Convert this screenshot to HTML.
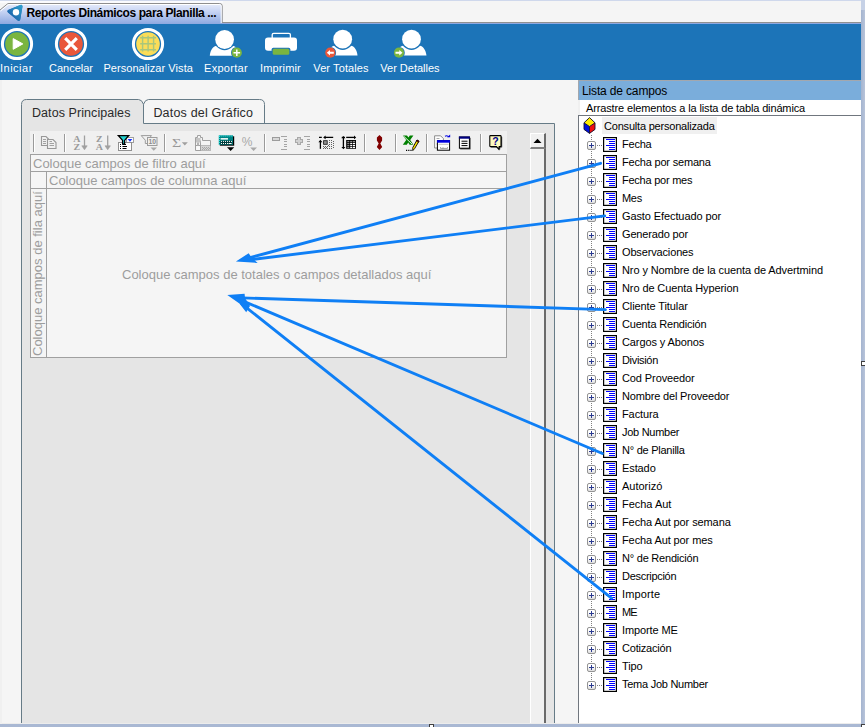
<!DOCTYPE html>
<html lang="es"><head><meta charset="utf-8"><title>Reportes Dinámicos para Planilla</title>
<style>
*{box-sizing:border-box;margin:0;padding:0}
html,body{width:865px;height:727px;overflow:hidden;background:#f5f5f5;font-family:"Liberation Sans",sans-serif}
body{position:relative}
.abs{position:absolute}
/* top strip */
.strip{position:absolute;left:0;top:0;width:865px;height:24px;background:#f5f5f5}
.strip .l0{position:absolute;left:0;top:0;width:865px;height:1px;background:#cfd8ec}
.strip .l1{position:absolute;left:0;top:1px;width:223px;height:2px;background:#fbfbfd}
.strip .lb{position:absolute;left:222px;top:22px;width:643px;height:1px;background:#909090}
.strip .lc{position:absolute;left:0;top:23px;width:865px;height:1px;background:#8fa9e2}
.ttab{position:absolute;left:0;top:0;width:224px;height:24px}
.ttl{position:absolute;left:26.5px;top:4px;height:18px;line-height:18px;font-size:12px;font-weight:bold;color:#000;letter-spacing:-0.38px;white-space:nowrap}
.bar{position:absolute;left:0;top:24px;width:865px;height:56px;background:#1c74b8}
.lbl{position:absolute;top:61px;height:14px;line-height:14px;font-size:11px;color:#fff;white-space:nowrap}
/* right panel */
.rp{position:absolute;left:578px;top:80px;width:287px;height:647px;background:#f0f0f0}
.rph{position:absolute;left:0;top:0;width:287px;height:20px;background:#7aaddb;border-top:1px solid #a3a7ad;border-left:1px solid #a3a7ad}
.rph span{position:absolute;left:3px;top:2px;line-height:16px;font-size:12px;color:#000;letter-spacing:-0.15px;white-space:nowrap}
.rps{position:absolute;left:2px;top:20px;width:285px;height:16px;background:#fff}
.rps span{position:absolute;left:6px;top:1px;line-height:14px;font-size:11px;color:#000;letter-spacing:-0.14px;white-space:nowrap}
.tree{position:absolute;left:0;top:35px;width:283px;height:612px;border:1px solid #70767e;border-right:none;border-bottom:none;background:#fff}
.cube{position:absolute;left:4px;top:0.5px}
.root{position:absolute;left:23px;top:1px;width:115px;height:17px;background:#f0f0f0}
.root span{position:absolute;left:2px;top:2px;line-height:15px;font-size:11px;letter-spacing:-0.2px;white-space:nowrap}
.vdot{position:absolute;left:12px;top:19px;width:1px;height:549px;background:repeating-linear-gradient(to bottom,#808080 0,#808080 1px,transparent 1px,transparent 2px)}
.rows{position:absolute;left:0;top:0}
.row{position:absolute;left:578px;height:18px;width:280px}
.pm{position:absolute;left:9px;top:5px;width:9px;height:9px;border:1px solid #939393;border-radius:2px;background:linear-gradient(#ffffff 30%,#dedede)}
.pm:before{content:"";position:absolute;left:1px;top:3px;width:5px;height:1px;background:#2a3a90}
.pm:after{content:"";position:absolute;left:3px;top:1px;width:1px;height:5px;background:#2a3a90}
.hd{position:absolute;left:19px;top:9px;width:5px;height:1px;background:repeating-linear-gradient(to right,#808080 0,#808080 1px,transparent 1px,transparent 2px)}
.fi{position:absolute;left:25px;top:1px}
.ft{position:absolute;left:44px;top:1px;line-height:14px;font-size:11px;color:#000;letter-spacing:-0.1px;white-space:nowrap}
/* left */
.tabpage{position:absolute;left:21px;top:123px;width:534px;height:610px;border:1px solid #8c9aa4;background:#e5e5e5}
.tab1{position:absolute;left:21px;top:99px;width:123px;height:26px;border:1px solid #8c9aa4;border-bottom:none;border-radius:9px 9px 0 0;background:#e5e5e5}
.tab2{position:absolute;left:143px;top:101px;width:123px;height:23px;border:1px solid #8c9aa4;border-bottom:none;border-radius:9px 9px 0 0;background:#f2f2f2}
.tabt{position:absolute;line-height:16px;font-size:12.5px;color:#2a2a2a;white-space:nowrap}
.ptb{position:absolute;left:30px;top:131px;width:477px;height:24px;background:#f0f0f0}
.grid{position:absolute;left:30px;top:154px;width:477px;height:204px;background:#f5f5f5;border:1px solid #a0a0a0}
.gt{position:absolute;font-size:13px;color:#9d9d9d;white-space:nowrap;line-height:16px}
.sep{position:absolute;top:134px;width:2px;height:18px;border-left:1px solid #909090;border-right:1px solid #fff}

</style></head><body>
<svg width="0" height="0" style="position:absolute"><defs>
<g id="fld"><rect x="0.6" y="0.6" width="12.8" height="13.8" fill="#fff" stroke="#000" stroke-width="1.2"/><path d="M3,2.5H12M6,4.5H12M6,6.5H12M3,8.5H12M6,10.5H12M6,12.5H12" stroke="#0000ff" stroke-width="1" fill="none" shape-rendering="crispEdges"/></g>
</defs></svg>
<div class="strip"><div class="l0"></div><div class="l1"></div><div class="lb"></div><div class="lc"></div>
<svg class="ttab" width="224" height="24" viewBox="0 0 224 24">
<defs><linearGradient id="tg" x1="0" y1="0" x2="0" y2="1"><stop offset="0" stop-color="#e8edfb"/><stop offset="0.4" stop-color="#c6d3f3"/><stop offset="1" stop-color="#8da8e0"/></linearGradient>
<linearGradient id="lg" x1="0" y1="1" x2="1" y2="0"><stop offset="0" stop-color="#1b5aa6"/><stop offset="1" stop-color="#2c9ccb"/></linearGradient></defs>
<path d="M0,10 L8,3.5 H219.7 Q222.2,3.5 222.2,6 V24 H0 Z" fill="url(#tg)"/>
<path d="M0,10 L8,3.5 H219.7 Q222.2,3.5 222.2,6 V23" fill="none" stroke="#8e8e8e" stroke-width="1"/>
<path d="M0.5,11 L8.3,4.5 H219.7 Q221.2,4.5 221.2,6 V23" fill="none" stroke="#ffffff" stroke-width="1"/>
<path d="M9,11.3 L20.9,6.4 L18.7,19.3 Z" fill="#2277b8" stroke="#2277b8" stroke-width="3.2" stroke-linejoin="round"/>
<path d="M9,11.3 L20.9,6.4 L18.7,19.3 Z" fill="url(#lg)" stroke="url(#lg)" stroke-width="3" stroke-linejoin="round"/>
<circle cx="16" cy="12.3" r="3.2" fill="#fff"/>
</svg>
<div class="ttl">Reportes Dinámicos para Planilla ...</div>
</div>
<div class="bar"></div>
<svg class="abs" style="left:0;top:24px" width="450" height="40" viewBox="0 24 450 40">
<!-- Iniciar -->
<circle cx="17" cy="44" r="14.6" fill="none" stroke="#fff" stroke-width="3"/>
<circle cx="17" cy="44" r="11.8" fill="#7ab540"/>
<path d="M13.2,38.6 L22.8,43.9 L13.2,49.3 Z" fill="#fff" stroke="#fff" stroke-width="1" stroke-linejoin="round"/>
<!-- Cancelar -->
<circle cx="71" cy="44" r="14.6" fill="none" stroke="#fff" stroke-width="3"/>
<circle cx="71" cy="44" r="11.8" fill="#e9573a"/>
<path d="M65.2,38.2 L76.8,49.8 M76.8,38.2 L65.2,49.8" stroke="#fff" stroke-width="3.2" stroke-linecap="butt"/>
<!-- Personalizar -->
<circle cx="148" cy="44" r="14.6" fill="none" stroke="#fff" stroke-width="3"/>
<circle cx="148" cy="44" r="11.8" fill="#fbdd58"/>
<path d="M142.6,35.8 V51.6 M148.1,35.8 V51.6 M153.6,35.8 V51.6 M140.2,37.8 H156 M140.2,43.8 H156 M140.2,49.8 H156" stroke="#a8c67c" stroke-width="1.4" fill="none"/>
<!-- Exportar -->
<path d="M209.8,55.8 C210.2,50.4 212.4,47.2 215.6,45.9 H233.6 C236.8,47.2 239,50.4 239.4,55.8 Z" fill="#fff"/>
<circle cx="224.6" cy="39.5" r="10.7" fill="#1c74b8"/>
<circle cx="224.6" cy="39.5" r="9.4" fill="#fff"/>
<circle cx="236.8" cy="52.7" r="5.8" fill="#1c74b8"/>
<circle cx="236.8" cy="52.7" r="5.1" fill="#7ab540"/>
<path d="M233.5,52.7 H240.1 M236.8,49.4 V56" stroke="#fff" stroke-width="1.5"/>
<!-- Imprimir -->
<rect x="272.2" y="33.3" width="18.2" height="6" rx="1.5" fill="none" stroke="#fff" stroke-width="1.3"/>
<rect x="265" y="37.4" width="32" height="13.4" rx="3" fill="#fff"/>
<rect x="271.6" y="47.8" width="18.8" height="7.6" rx="1.8" fill="#1c74b8"/>
<rect x="272.7" y="48.8" width="16.6" height="5.9" rx="1.5" fill="#7ab540"/>
<!-- Ver Totales -->
<path d="M328,55.6 C328.4,50.2 330.6,47 333.8,45.7 H351.6 C354.8,47 357,50.2 357.5,55.6 Z" fill="#fff"/>
<circle cx="342.7" cy="39.2" r="10.7" fill="#1c74b8"/>
<circle cx="342.7" cy="39.2" r="9.4" fill="#fff"/>
<circle cx="330.3" cy="52.7" r="5.8" fill="#1c74b8"/>
<circle cx="330.3" cy="52.7" r="5.1" fill="#e9573a"/>
<path d="M326.8,52.7 L330,50 V51.7 H333.8 V53.7 H330 V55.4 Z" fill="#fff"/>
<!-- Ver Detalles -->
<path d="M396.8,55.6 C397.2,50.2 399.4,47 402.6,45.7 H420.4 C423.6,47 425.8,50.2 426.5,55.6 Z" fill="#fff"/>
<circle cx="411.5" cy="39.2" r="10.7" fill="#1c74b8"/>
<circle cx="411.5" cy="39.2" r="9.4" fill="#fff"/>
<circle cx="399" cy="52.7" r="5.8" fill="#1c74b8"/>
<circle cx="399" cy="52.7" r="5.1" fill="#7ab540"/>
<path d="M402.5,52.7 L399.3,50 V51.7 H395.5 V53.7 H399.3 V55.4 Z" fill="#fff"/>
</svg>
<div class="lbl" id="l1" style="left:0px;letter-spacing:0.5px">Iniciar</div>
<div class="lbl" id="l2" style="left:49px">Cancelar</div>
<div class="lbl" id="l3" style="left:103.4px;letter-spacing:0.06px">Personalizar Vista</div>
<div class="lbl" id="l4" style="left:204px;letter-spacing:0.3px">Exportar</div>
<div class="lbl" id="l5" style="left:260px;letter-spacing:0.15px">Imprimir</div>
<div class="lbl" id="l6" style="left:313.3px;letter-spacing:0.1px">Ver Totales</div>
<div class="lbl" id="l7" style="left:380.3px">Ver Detalles</div>

<svg class="abs" style="left:0;top:90px" width="600" height="640" viewBox="0 90 600 640">
<path d="M21.5,730 V104.5 Q21.5,99.5 26.5,99.5 H138.5 Q141.8,99.5 143.5,104.2 V123.5 H554.5 V730 Z" fill="#e5e5e5"/>
<path d="M143.5,104.2 Q145.2,99.5 148.5,99.5 H259.5 Q264.5,99.5 264.5,104.5 V123.5 H143.5 Z" fill="#f5f5f5"/>
<path d="M21.5,730 V104.5 Q21.5,99.5 26.5,99.5 H138.5 Q141.8,99.5 143.5,104.2 Q145.2,99.5 148.5,99.5 H259.5 Q264.5,99.5 264.5,104.5 V123.5 M143.5,104.2 V123.5 H554.5 V730" fill="none" stroke="#667b87" stroke-width="1"/>
</svg>
<div class="tabt" id="t1" style="left:32px;top:105px;letter-spacing:0.07px">Datos Principales</div>
<div class="tabt" id="t2" style="left:153.4px;top:105px;letter-spacing:0.19px">Datos del Gráfico</div>
<div class="ptb"></div>
<div class="grid">
<div class="abs" style="left:0;top:16px;width:475px;height:1px;background:#a0a0a0"></div>
<div class="abs" style="left:0;top:33px;width:475px;height:1px;background:#a0a0a0"></div>
<div class="abs" style="left:15px;top:17px;width:1px;height:185px;background:#a0a0a0"></div>
<div class="gt" id="g1" style="left:2px;top:1px">Coloque campos de filtro aquí</div>
<div class="gt" id="g2" style="left:18px;top:18px">Coloque campos de columna aquí</div>
<div class="gt" id="g3" style="left:91px;top:112px">Coloque campos de totales o campos detallados aquí</div>
<div class="gt" id="g4" style="left:-1.5px;top:200.5px;transform-origin:0 0;transform:rotate(-90deg)">Coloque campos de fila aquí</div>
</div>
<!-- scrollbar -->
<div class="abs" style="left:530px;top:133px;width:16px;height:600px;background:#f0f0f0;border-left:1px solid #fff;border-right:2px solid #6a6a6a"></div>
<div class="abs" style="left:530px;top:133px;width:16px;height:16px;background:#f0f0f0;border-left:1px solid #fff;border-top:1px solid #fff;border-right:2px solid #6a6a6a;border-bottom:2px solid #808080"></div>
<svg class="abs" style="left:533px;top:137.5px" width="9" height="6" viewBox="0 0 9 6"><path d="M0.5,5 L4.5,0.8 L8.5,5 Z" fill="#000"/></svg>


<svg class="abs" style="left:30px;top:131px" width="477" height="24" viewBox="30 131 477 24" shape-rendering="auto">
<g fill="none" stroke="#9a9a9a" stroke-width="1">
<!-- separators -->
<path d="M33.5,134V152M64.5,134V152M164.5,134V152M264.5,134V152M364.5,134V152M395.5,134V152M426.5,134V152M480.5,134V152"/>
</g>
<g fill="none" stroke="#ffffff" stroke-width="1">
<path d="M34.5,134V152M65.5,134V152M165.5,134V152M265.5,134V152M365.5,134V152M396.5,134V152M427.5,134V152M481.5,134V152"/>
</g>
<!-- copy (disabled) -->
<g fill="#f0f0f0" stroke="#989898" stroke-width="1.1">
<path d="M41.5,136.5H46L48.5,139V145.5H41.5Z"/>
<path d="M47.5,139.5H53L56,142.5V148.5H47.5Z"/>
<path d="M43,139.5H46M43,141.5H46M43,143.5H46M49.5,143.5H54M49.5,145.5H54M49.5,141.5H52" stroke-width="0.9"/>
</g>
<!-- A-Z -->
<g font-family="Liberation Serif,serif" font-weight="bold" font-size="8.6px" fill="#9a9a9a" text-anchor="middle">
<text x="76.8" y="141.6" textLength="7.2" lengthAdjust="spacingAndGlyphs">A</text><text x="76.8" y="149.5" textLength="6.6" lengthAdjust="spacingAndGlyphs">Z</text>
<text x="99.3" y="141.6" textLength="6.6" lengthAdjust="spacingAndGlyphs">Z</text><text x="99.3" y="149.5" textLength="7.2" lengthAdjust="spacingAndGlyphs">A</text>
</g>
<g fill="#a0a0a0" stroke="#a0a0a0" stroke-width="1">
<path d="M84.5,135.5V147" fill="none" stroke-width="1.3"/><path d="M81.8,145.8H87.2L84.5,149.8Z" stroke-width="0.6"/>
<path d="M107.7,135.5V147" fill="none" stroke-width="1.3"/><path d="M105,145.8H110.4L107.7,149.8Z" stroke-width="0.6"/>
</g>
<!-- autofilter -->
<rect x="126.5" y="137.5" width="7" height="5" fill="#fff" stroke="#a0a0a0"/>
<path d="M127.6,139H132.4L130,141.8Z" fill="#1030ff"/>
<rect x="118.5" y="142.5" width="13" height="8" fill="#fff" stroke="#909090"/>
<path d="M120,144.5H121M120,146.5H121M120,148.5H121M122.5,144.5H126M122.5,146.5H127M122.5,148.5H126.5" stroke="#000" stroke-width="1"/>
<path d="M118.3,135.5H128.8L124.6,140.4V144H122.6V140.4Z" fill="#20d0d0" stroke="#000" stroke-width="1.25" stroke-linejoin="miter"/>
<!-- top10 (disabled) -->
<g fill="#f0f0f0" stroke="#9c9c9c" stroke-width="1">
<path d="M141.2,135.6H151.5L147.5,140.2V143.5H145.3V140.2Z"/>
<rect x="147.5" y="137.5" width="9.5" height="8"/>
<path d="M150.5,147.6H157L153.75,150.8Z" fill="#a8a8a8" stroke="none"/>
</g>
<text x="152.3" y="144.3" font-family="Liberation Sans,sans-serif" font-size="6.8px" font-weight="bold" fill="#8c8c8c" text-anchor="middle">10</text>
<!-- sigma -->
<text x="176.5" y="146.8" font-family="Liberation Serif,serif" font-size="12.5px" fill="#989898" text-anchor="middle" textLength="9.2" lengthAdjust="spacingAndGlyphs">Σ</text>
<path d="M181.8,142.2H187.8L184.8,145.4Z" fill="#a0a0a0"/>
<!-- subtotal (disabled) -->
<g fill="#f4f4f4" stroke="#a0a0a0" stroke-width="1">
<path d="M195.5,137.5H197.5V135.5H200.5V137.5H202.5V140.5H210.5V150.5H195.5Z"/>
<path d="M200.5,140.5V150.5M195.5,145.5H200.5M200.5,145.8H210.5" />
</g>
<g fill="#a8a8a8">
<rect x="196" y="138" width="4.5" height="4.5" fill="#c4c4c4"/>
<rect x="197" y="142.5" width="2" height="3" fill="#b4b4b4"/>
<rect x="201" y="146" width="9.5" height="4.5" fill="#d4d4d4"/>
<rect x="202" y="147" width="1" height="1"/><rect x="204" y="147" width="1" height="1"/><rect x="206" y="147" width="1" height="1"/><rect x="208" y="147" width="1" height="1"/>
<rect x="203" y="148" width="1" height="1"/><rect x="205" y="148" width="1" height="1"/><rect x="207" y="148" width="1" height="1"/><rect x="209" y="148" width="1" height="1"/>
<rect x="202" y="149" width="1" height="1"/><rect x="204" y="149" width="1" height="1"/><rect x="206" y="149" width="1" height="1"/><rect x="208" y="149" width="1" height="1"/>
</g>
<rect x="196.5" y="146.5" width="3.5" height="3.5" fill="#fafafa"/>
<!-- calc -->
<rect x="219.8" y="136.3" width="14.4" height="9.4" fill="#000"/>
<rect x="218.8" y="135.3" width="14.2" height="9.5" fill="#008484"/>
<path d="M219.3,136H232.5" stroke="#40ffff" stroke-width="0.9" stroke-dasharray="1 1"/>
<path d="M219.3,136V144.5" stroke="#40ffff" stroke-width="0.9" stroke-dasharray="1 1"/>
<rect x="220.6" y="138.1" width="7.4" height="1.5" fill="#fff"/>
<rect x="220.4" y="140.6" width="12" height="3.9" fill="#003c3c"/>
<path d="M221,141.4H232M221,143.5H228" stroke="#fff" stroke-width="1" stroke-dasharray="1 1"/>
<rect x="228.6" y="143" width="3" height="1" fill="#fff"/>
<path d="M227,147.2H234.2L230.6,150.9Z" fill="#000"/>
<!-- percent -->
<text x="247" y="145.6" font-family="Liberation Sans,sans-serif" font-size="12px" fill="#a8a8a8" text-anchor="middle">%</text>
<path d="M250.2,147.4H257L253.6,150.9Z" fill="#a8a8a8"/>
<!-- hide detail -->
<g stroke="#a4a4a4" stroke-width="1" fill="none" shape-rendering="crispEdges">
<rect x="272.5" y="137.5" width="7" height="3" fill="#d8d8d8" stroke="#9c9c9c"/>
<path d="M280.6,136.5H287M283.5,139H287M283.5,141.5H287M283.5,144H287M283.5,146.5H287M280.6,149H287"/>
<path d="M295.5,139.5H297.8V137.3H300.3V139.5H302.6V142H300.3V144.3H297.8V142H295.5Z" fill="#d0d0d0" stroke="#a8a8a8"/>
<path d="M304,136.5H310.3M306.8,139H310.3M306.8,141.5H310.3M306.8,144H310.3M306.8,146.5H310.3M304,149H310.3"/>
</g>
<!-- collapse -->
<g stroke="#000" stroke-width="1.3" fill="none">
<path d="M319,137.4H321.8M324.5,137.4H333.2"/>
<path d="M320.4,141V148.8"/>
</g>
<path d="M318.4,142.2L320.4,139.8L322.4,142.2Z" fill="#000"/>
<path d="M325.6,135.6L323.2,137.4L325.6,139.2Z" fill="#000"/>
<rect x="323.6" y="140.7" width="3.6" height="3.6" fill="#909090" stroke="#202020" stroke-width="0.9"/>
<g fill="#606060">
<rect x="329" y="140" width="1" height="1"/><rect x="331" y="140" width="1" height="1"/><rect x="333" y="141" width="1" height="1"/>
<rect x="329" y="142" width="1" height="1"/><rect x="331" y="142" width="1" height="1"/><rect x="333" y="143" width="1" height="1"/>
<rect x="329" y="144" width="1" height="1"/><rect x="331" y="144" width="1" height="1"/><rect x="333" y="145" width="1" height="1"/>
<rect x="323" y="146" width="1" height="1"/><rect x="325" y="146" width="1" height="1"/><rect x="327" y="146" width="1" height="1"/><rect x="329" y="146" width="1" height="1"/><rect x="331" y="146" width="1" height="1"/><rect x="333" y="147" width="1" height="1"/>
<rect x="324" y="147" width="1" height="1"/><rect x="326" y="147" width="1" height="1"/><rect x="328" y="145" width="1" height="1"/>
<rect x="323" y="148" width="1" height="1"/><rect x="325" y="148" width="1" height="1"/><rect x="327" y="148" width="1" height="1"/><rect x="329" y="148" width="1" height="1"/><rect x="331" y="148" width="1" height="1"/>
</g>
<!-- expand -->
<g stroke="#000" stroke-width="1.3" fill="none">
<path d="M343.4,137.5V148"/><path d="M346.2,137.4H355"/>
</g>
<path d="M341.4,138.2L343.4,135.9L345.4,138.2ZM341.4,146.9L343.4,149.2L345.4,146.9Z" fill="#000"/>
<path d="M354,135.6L356.2,137.4L354,139.2Z" fill="#000"/>
<path d="M341.8,137.4H345" stroke="#000" stroke-width="1.2"/>
<rect x="346.2" y="140" width="9.8" height="8.8" fill="#000"/>
<g fill="#8a8a8a"><rect x="347.3" y="140.9" width="2" height="1.1"/><rect x="350.2" y="140.9" width="2.1" height="1.1"/><rect x="353" y="140.9" width="2.1" height="1.1"/>
<rect x="347.3" y="142.8" width="2" height="1.3"/><rect x="347.3" y="144.9" width="2" height="1.3"/><rect x="347.3" y="146.9" width="2" height="1.2"/></g>
<g fill="#fff"><rect x="350.2" y="142.8" width="2.1" height="1.3"/><rect x="353" y="142.8" width="2.1" height="1.3"/>
<rect x="350.2" y="144.9" width="2.1" height="1.3"/><rect x="353" y="144.9" width="2.1" height="1.3"/>
<rect x="350.2" y="146.9" width="2.1" height="1.2"/><rect x="353" y="146.9" width="2.1" height="1.2"/></g>
<!-- refresh ! -->
<path d="M379.5,134.9L382.1,137.5V140.5L380.3,143.6L382.2,146.9L379.5,149.9L376.8,146.9L378.7,143.6L376.9,140.5V137.5Z" fill="#800000"/>
<!-- excel -->
<path d="M402.8,135.4H407L408.4,137.4L409.8,135.4H413.4L410.2,140L413.4,144.7H409.6L408.2,142.6L406.8,144.7H402.8L406.2,140Z" fill="#008000"/>
<path d="M403.5,136L412.2,144.2" stroke="#fff" stroke-width="0.9"/>
<path d="M417,140L419,141.2L414.6,148.6L412.8,150.6L412.8,147.6Z" fill="#ffe800" stroke="#000" stroke-width="0.9" stroke-linejoin="round"/>
<path d="M417,140L419,141.2L418.4,142.3L416.4,141.1Z" fill="#a00000" stroke="#000" stroke-width="0.6"/>
<path d="M406,150.4H407.2M408.2,150.4H409.4M410.4,150.4H411.6" stroke="#000" stroke-width="1.2"/>
<!-- commands -->
<path d="M434.6,135.8H440.6L443.4,138.6V148H434.6Z" fill="#fff" stroke="#808080" stroke-width="0.9"/>
<path d="M436.5,138.5H439.5M436.5,144H437.5" stroke="#a0a0a0" stroke-width="0.9"/>
<rect x="437.4" y="140.6" width="12.2" height="9.6" fill="#fff" stroke="#000" stroke-width="1"/>
<rect x="437" y="140.1" width="13" height="2.6" fill="#0000e0"/>
<path d="M438.5,144.3H448.5" stroke="#b0b0b0" stroke-width="0.8"/>
<path d="M440.5,147.2V148.4H447.5V147.2M443,147.4V148.4" stroke="#808080" stroke-width="0.8" fill="none"/>
<path d="M445,136.2Q447.5,135 448.6,137" stroke="#0000e0" stroke-width="1.1" fill="none"/>
<path d="M447,137.2H450.2V134.6Z" fill="#0000e0"/>
<!-- field list -->
<rect x="460.2" y="137.8" width="10.4" height="11.6" fill="#404040"/>
<rect x="459.4" y="137" width="10" height="11.2" fill="#fff" stroke="#000" stroke-width="1"/>
<rect x="458.9" y="136.5" width="11" height="2.2" fill="#000080"/>
<path d="M461.5,141.2H467.5M461.5,143.4H467.5M461.5,145.6H467.5" stroke="#000" stroke-width="1"/>
<!-- help -->
<path d="M490.2,136.4Q490.2,135.8 490.8,135.8H500.8Q501.4,135.8 501.4,136.4V146.2Q501.4,146.8 500.8,146.8H499.6L499.2,149.4L496.8,146.8H490.8Q490.2,146.8 490.2,146.2Z" fill="#404040" transform="translate(0.8,0.8)"/>
<path d="M490.2,136.4Q490.2,135.8 490.8,135.8H500.8Q501.4,135.8 501.4,136.4V146.2Q501.4,146.8 500.8,146.8H499.6L499.2,149.4L496.8,146.8H490.8Q490.2,146.8 490.2,146.2Z" fill="#fffbc0" stroke="#000" stroke-width="1.1" transform="translate(-0.4,-0.2)"/>
<text x="495.5" y="145.3" font-family="Liberation Sans,sans-serif" font-size="10.5px" font-weight="bold" fill="#000090" text-anchor="middle">?</text>
</svg>

<div class="rp">
<div class="rph"><span>Lista de campos</span></div>
<div class="rps"><span>Arrastre elementos a la lista de tabla dinámica</span></div>
<div class="tree">
<svg class="cube" width="13" height="17" viewBox="0 0 13 17"><polygon points="6.5,0.6 12,5.8 6.5,9.5 1,5.8" fill="#ffee00"/><polygon points="1,5.8 6.5,9.5 6.5,16.4 1,12.4" fill="#0010e0"/><polygon points="12,5.8 12,12.4 6.5,16.4 6.5,9.5" fill="#f01010"/><path d="M6.5,0.6 L12,5.8 V12.4 L6.5,16.4 L1,12.4 V5.8 Z M1,5.8 L6.5,9.5 L12,5.8 M6.5,9.5 V16.4" fill="none" stroke="#101030" stroke-width="0.9" stroke-linejoin="round"/></svg>
<div class="root"><span>Consulta personalizada</span></div>
<div class="vdot"></div>
</div>
</div>
<div class="rows">
<div class="row" style="top:136px"><i class="pm"></i><i class="hd"></i><svg class="fi" width="14" height="15" viewBox="0 0 14 15"><use href="#fld"/></svg><span class="ft" style="letter-spacing:-0.22px">Fecha</span></div>
<div class="row" style="top:154px"><i class="pm"></i><i class="hd"></i><svg class="fi" width="14" height="15" viewBox="0 0 14 15"><use href="#fld"/></svg><span class="ft" style="letter-spacing:-0.19px">Fecha por semana</span></div>
<div class="row" style="top:172px"><i class="pm"></i><i class="hd"></i><svg class="fi" width="14" height="15" viewBox="0 0 14 15"><use href="#fld"/></svg><span class="ft" style="letter-spacing:-0.24px">Fecha por mes</span></div>
<div class="row" style="top:190px"><i class="pm"></i><i class="hd"></i><svg class="fi" width="14" height="15" viewBox="0 0 14 15"><use href="#fld"/></svg><span class="ft" style="letter-spacing:-0.30px">Mes</span></div>
<div class="row" style="top:208px"><i class="pm"></i><i class="hd"></i><svg class="fi" width="14" height="15" viewBox="0 0 14 15"><use href="#fld"/></svg><span class="ft">Gasto Efectuado por</span></div>
<div class="row" style="top:226px"><i class="pm"></i><i class="hd"></i><svg class="fi" width="14" height="15" viewBox="0 0 14 15"><use href="#fld"/></svg><span class="ft" style="letter-spacing:-0.16px">Generado por</span></div>
<div class="row" style="top:244px"><i class="pm"></i><i class="hd"></i><svg class="fi" width="14" height="15" viewBox="0 0 14 15"><use href="#fld"/></svg><span class="ft" style="letter-spacing:-0.15px">Observaciones</span></div>
<div class="row" style="top:262px"><i class="pm"></i><i class="hd"></i><svg class="fi" width="14" height="15" viewBox="0 0 14 15"><use href="#fld"/></svg><span class="ft">Nro y Nombre de la cuenta de Advertmind</span></div>
<div class="row" style="top:280px"><i class="pm"></i><i class="hd"></i><svg class="fi" width="14" height="15" viewBox="0 0 14 15"><use href="#fld"/></svg><span class="ft">Nro de Cuenta Hyperion</span></div>
<div class="row" style="top:298px"><i class="pm"></i><i class="hd"></i><svg class="fi" width="14" height="15" viewBox="0 0 14 15"><use href="#fld"/></svg><span class="ft">Cliente Titular</span></div>
<div class="row" style="top:316px"><i class="pm"></i><i class="hd"></i><svg class="fi" width="14" height="15" viewBox="0 0 14 15"><use href="#fld"/></svg><span class="ft" style="letter-spacing:-0.19px">Cuenta Rendición</span></div>
<div class="row" style="top:334px"><i class="pm"></i><i class="hd"></i><svg class="fi" width="14" height="15" viewBox="0 0 14 15"><use href="#fld"/></svg><span class="ft">Cargos y Abonos</span></div>
<div class="row" style="top:352px"><i class="pm"></i><i class="hd"></i><svg class="fi" width="14" height="15" viewBox="0 0 14 15"><use href="#fld"/></svg><span class="ft" style="letter-spacing:-0.32px">División</span></div>
<div class="row" style="top:370px"><i class="pm"></i><i class="hd"></i><svg class="fi" width="14" height="15" viewBox="0 0 14 15"><use href="#fld"/></svg><span class="ft">Cod Proveedor</span></div>
<div class="row" style="top:388px"><i class="pm"></i><i class="hd"></i><svg class="fi" width="14" height="15" viewBox="0 0 14 15"><use href="#fld"/></svg><span class="ft" style="letter-spacing:-0.17px">Nombre del Proveedor</span></div>
<div class="row" style="top:406px"><i class="pm"></i><i class="hd"></i><svg class="fi" width="14" height="15" viewBox="0 0 14 15"><use href="#fld"/></svg><span class="ft">Factura</span></div>
<div class="row" style="top:424px"><i class="pm"></i><i class="hd"></i><svg class="fi" width="14" height="15" viewBox="0 0 14 15"><use href="#fld"/></svg><span class="ft" style="letter-spacing:-0.28px">Job Number</span></div>
<div class="row" style="top:442px"><i class="pm"></i><i class="hd"></i><svg class="fi" width="14" height="15" viewBox="0 0 14 15"><use href="#fld"/></svg><span class="ft" style="letter-spacing:-0.25px">N° de Planilla</span></div>
<div class="row" style="top:460px"><i class="pm"></i><i class="hd"></i><svg class="fi" width="14" height="15" viewBox="0 0 14 15"><use href="#fld"/></svg><span class="ft">Estado</span></div>
<div class="row" style="top:478px"><i class="pm"></i><i class="hd"></i><svg class="fi" width="14" height="15" viewBox="0 0 14 15"><use href="#fld"/></svg><span class="ft" style="letter-spacing:-0.01px">Autorizó</span></div>
<div class="row" style="top:496px"><i class="pm"></i><i class="hd"></i><svg class="fi" width="14" height="15" viewBox="0 0 14 15"><use href="#fld"/></svg><span class="ft" style="letter-spacing:-0.02px">Fecha Aut</span></div>
<div class="row" style="top:514px"><i class="pm"></i><i class="hd"></i><svg class="fi" width="14" height="15" viewBox="0 0 14 15"><use href="#fld"/></svg><span class="ft">Fecha Aut por semana</span></div>
<div class="row" style="top:532px"><i class="pm"></i><i class="hd"></i><svg class="fi" width="14" height="15" viewBox="0 0 14 15"><use href="#fld"/></svg><span class="ft">Fecha Aut por mes</span></div>
<div class="row" style="top:550px"><i class="pm"></i><i class="hd"></i><svg class="fi" width="14" height="15" viewBox="0 0 14 15"><use href="#fld"/></svg><span class="ft" style="letter-spacing:-0.22px">N° de Rendición</span></div>
<div class="row" style="top:568px"><i class="pm"></i><i class="hd"></i><svg class="fi" width="14" height="15" viewBox="0 0 14 15"><use href="#fld"/></svg><span class="ft" style="letter-spacing:-0.29px">Descripción</span></div>
<div class="row" style="top:586px"><i class="pm"></i><i class="hd"></i><svg class="fi" width="14" height="15" viewBox="0 0 14 15"><use href="#fld"/></svg><span class="ft" style="letter-spacing:0.15px">Importe</span></div>
<div class="row" style="top:604px"><i class="pm"></i><i class="hd"></i><svg class="fi" width="14" height="15" viewBox="0 0 14 15"><use href="#fld"/></svg><span class="ft" style="letter-spacing:-0.90px">ME</span></div>
<div class="row" style="top:622px"><i class="pm"></i><i class="hd"></i><svg class="fi" width="14" height="15" viewBox="0 0 14 15"><use href="#fld"/></svg><span class="ft">Importe ME</span></div>
<div class="row" style="top:640px"><i class="pm"></i><i class="hd"></i><svg class="fi" width="14" height="15" viewBox="0 0 14 15"><use href="#fld"/></svg><span class="ft" style="letter-spacing:-0.20px">Cotización</span></div>
<div class="row" style="top:658px"><i class="pm"></i><i class="hd"></i><svg class="fi" width="14" height="15" viewBox="0 0 14 15"><use href="#fld"/></svg><span class="ft">Tipo</span></div>
<div class="row" style="top:676px"><i class="pm"></i><i class="hd"></i><svg class="fi" width="14" height="15" viewBox="0 0 14 15"><use href="#fld"/></svg><span class="ft" style="letter-spacing:-0.26px">Tema Job Number</span></div>
</div>
<svg class="abs" style="left:0;top:0;pointer-events:none" width="865" height="727" viewBox="0 0 865 727">
<g stroke="#0f7ff5" stroke-width="2.9" stroke-linecap="round" fill="none">
<line x1="600.6" y1="163.3" x2="250" y2="257.7"/>
<line x1="604.7" y1="215.9" x2="252" y2="259.5"/>
<line x1="605.4" y1="309.6" x2="242" y2="297.9"/>
<line x1="602.4" y1="453.5" x2="242" y2="300.6"/>
<line x1="611.5" y1="598.2" x2="242" y2="304.1"/>
</g>
<g fill="#0f7ff5">
<polygon points="235.9,261.5 248.7,253.2 251.5,257.5 257.7,262.9"/>
<polygon points="227.3,295.1 244.6,293.8 245,298 250,306 246.2,312.2 239.4,303.4"/>
</g>
</svg>
<!-- bottom/right strips -->
<div class="abs" style="left:861px;top:0;width:4px;height:727px;background:linear-gradient(to right,#a4b4cf,#b8c4da)"></div>
<div class="abs" style="left:861px;top:0;width:4px;height:10px;background:#c6d1e6"></div>
<div class="abs" style="left:0;top:724px;width:865px;height:3px;background:#a9b8d3"></div>
<div class="abs" style="left:0;top:723px;width:861px;height:1px;background:#ececec"></div>
<div class="abs" style="left:429px;top:724px;width:5px;height:5px;background:#fff;border:1px solid #404040"></div>
<div class="abs" style="left:861px;top:361px;width:6px;height:5px;background:#fff;border:1px solid #404040"></div>
<div class="abs" style="left:861px;top:724px;width:6px;height:5px;background:#fff;border:1px solid #404040"></div>
<div class="abs" style="left:0;top:80px;width:2px;height:644px;background:#f0f0f0"></div>

</body></html>
